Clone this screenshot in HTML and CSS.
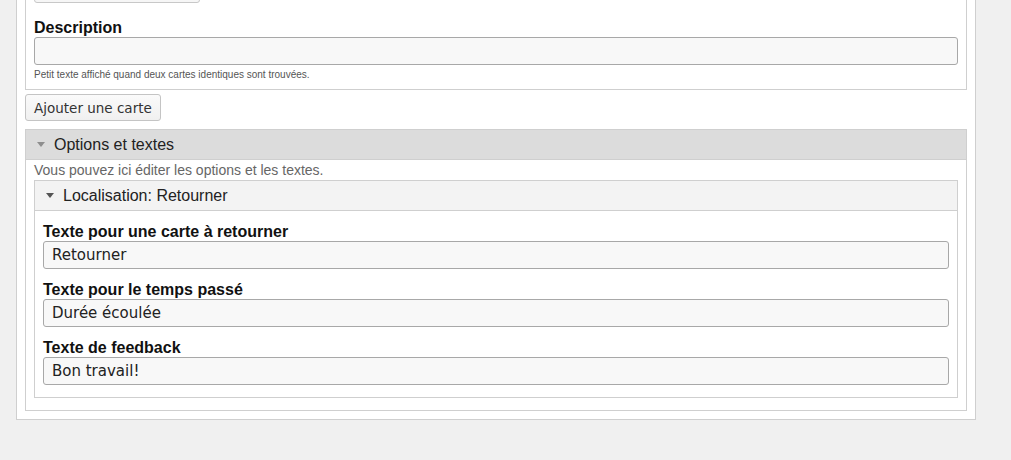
FILE: index.html
```html
<!DOCTYPE html>
<html lang="fr">
<head>
<meta charset="utf-8">
<title>Cartes</title>
<link rel="stylesheet" href="styles.css">
</head>
<body>
<div class="panel">
  <div class="group card-fields">
    <div class="stub"></div>
    <div class="field">
      <label class="label" for="desc">Description</label>
      <input class="input" id="desc" type="text" value="">
      <div class="help">Petit texte affiché quand deux cartes identiques sont trouvées.</div>
    </div>
  </div>
  <div class="actions">
    <button class="btn" type="button">Ajouter une carte</button>
  </div>
  <div class="group options">
    <div class="head head-dark"><span class="tri tri-light"></span>Options et textes</div>
    <div class="options-body">
      <div class="desc">Vous pouvez ici éditer les options et les textes.</div>
      <div class="group inner">
        <div class="head head-light"><span class="tri tri-dark"></span>Localisation: Retourner</div>
        <div class="inner-body">
          <div class="field">
            <label class="label" for="f1">Texte pour une carte à retourner</label>
            <input class="input" id="f1" type="text" value="Retourner">
          </div>
          <div class="field">
            <label class="label" for="f2">Texte pour le temps passé</label>
            <input class="input" id="f2" type="text" value="Durée écoulée">
          </div>
          <div class="field">
            <label class="label" for="f3">Texte de feedback</label>
            <input class="input" id="f3" type="text" value="Bon travail!">
          </div>
        </div>
      </div>
    </div>
  </div>
</div>
</body>
</html>
```

FILE: styles.css
```css
html, body {
  margin: 0;
  padding: 0;
}
body {
  background: #f0f0f0;
  font-family: "Liberation Sans", Arial, sans-serif;
  color: #222;
  overflow: hidden;
}
.panel {
  box-sizing: border-box;
  width: 960px;
  margin: -41px 0 0 16px;
  background: #fff;
  border: 1px solid #cfcfcf;
  padding: 8px 8px 8px 8px;
}
.group {
  border: 1px solid #cfcfcf;
  background: #fff;
}
.card-fields {
  padding: 8px 8px 7px 8px;
}
.stub {
  box-sizing: border-box;
  width: 166px;
  height: 26px;
  border: 1px solid #c8c8c8;
  border-radius: 3px;
  background: #f6f6f6;
  margin-bottom: 16px;
}
.field {
  display: flex;
  flex-direction: column;
}
.label {
  display: block;
  font-family: "Liberation Sans", Arial, sans-serif;
  font-weight: bold;
  font-size: 16px;
  line-height: 18px;
  color: #111;
}
.input {
  display: block;
  box-sizing: border-box;
  width: 100%;
  height: 28px;
  margin: 0;
  padding: 0 8px;
  border: 1px solid #a8a8a8;
  border-radius: 3px;
  background: #f8f8f8;
  font-family: "DejaVu Sans", sans-serif;
  font-size: 15px;
  color: #222;
  outline: none;
}
.help {
  margin-top: 3px;
  font-size: 10px;
  line-height: 14px;
  color: #555;
}
.actions {
  display: flex;
  margin: 4px 0 8px;
}
.btn {
  box-sizing: border-box;
  height: 27px;
  padding: 0 8px;
  border: 1px solid #c4c4c4;
  border-radius: 3px;
  background: linear-gradient(#fafafa, #f0f0f0);
  font-family: "DejaVu Sans", sans-serif;
  font-size: 13.5px;
  color: #333;
}
.head {
  display: flex;
  align-items: center;
  height: 29px;
  padding-left: 11px;
  border-bottom: 1px solid #cfcfcf;
  font-size: 16px;
  color: #222;
}
.head-dark {
  background: #dcdcdc;
}
.head-light {
  background: #f3f3f3;
}
.tri {
  width: 0;
  height: 0;
  border-left: 4.5px solid transparent;
  border-right: 4.5px solid transparent;
  margin-right: 9px;
}
.tri-light {
  border-top: 5px solid #8e8e8e;
}
.tri-dark {
  border-top: 5px solid #555;
}
.options-body {
  padding: 0 8px 12px;
}
.desc {
  font-size: 14px;
  line-height: 20px;
  color: #666;
}
.inner-body {
  display: flex;
  flex-direction: column;
  gap: 12px;
  padding: 12px 8px;
}
```
